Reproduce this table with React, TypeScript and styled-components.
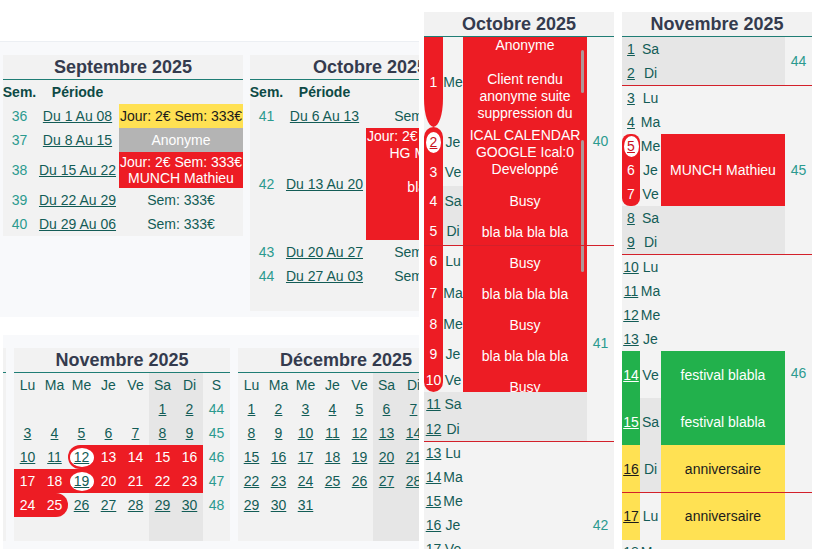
import React from "react";
import styled, { createGlobalStyle, css } from "styled-components";

type Tone = "red" | "green" | "yellow" | "gray";
const BG: Record<Tone, string> = { red: "#ed1c24", green: "#22b14c", yellow: "#ffe153", gray: "#b4b4b4" };
const FG: Record<Tone, string> = { red: "#ffffff", green: "#ffffff", yellow: "#1b1b1b", gray: "#ffffff" };

const INK = "#135c56";
const HEAD = "#0d4a45";
const WEEK = "#2b9a8f";
const TITLE = "#343b4e";
const LINE = "#1f7d75";
const CARD = "#f2f2f2";
const WEEKEND = "#e6e6e6";
const PANEL = "#f8f9fb";
const SEP = "#d3202a";
const RINGTXT = "#c8101e";

const GlobalStyle = createGlobalStyle`
  html, body { margin: 0; padding: 0; background: #ffffff; }
  body { font-family: "Liberation Sans", Arial, sans-serif; font-size: 14px; color: ${INK}; }
  #root { width: 815px; height: 549px; overflow: hidden; }
`;

const Page = styled.div`
  display: flex;
  align-items: flex-start;
  width: 815px;
  height: 549px;
  overflow: hidden;
  background: #ffffff;
  font-family: "Liberation Sans", Arial, sans-serif;
  font-size: 14px;
`;

const LeftArea = styled.div`
  flex: none;
  width: 419px;
  height: 549px;
  padding-top: 41px;
  box-sizing: border-box;
  overflow: hidden;
  display: flex;
  flex-direction: column;
`;

const TopPanel = styled.div`
  flex: none;
  height: 276px;
  box-sizing: border-box;
  background: ${PANEL};
  border-top: 1px solid #eceff3;
  padding: 13px 0 0 3px;
  display: flex;
  gap: 7px;
  align-items: flex-start;
  overflow: hidden;
`;

const BottomPanel = styled.div`
  flex: 1;
  margin: 18px 0 0 3px;
  background: ${PANEL};
  padding-top: 13px;
  display: flex;
  gap: 8px;
  align-items: flex-start;
  overflow: hidden;
`;

/* ---------- week list cards ---------- */

const WeekCard = styled.section<{ $padBottom: number }>`
  flex: none;
  width: 240px;
  background: ${CARD};
  padding-bottom: ${(p) => p.$padBottom}px;
`;

const CardTitle = styled.h2`
  margin: 0;
  height: 24px;
  line-height: 24px;
  text-align: center;
  font-size: 18px;
  font-weight: 700;
  color: ${TITLE};
  border-bottom: 1px solid ${LINE};
  white-space: nowrap;
`;

const WeekRow = styled.div<{ $h: number }>`
  display: grid;
  grid-template-columns: 33px 83px 124px;
  height: ${(p) => p.$h}px;
`;

const HeadCell = styled.div`
  display: flex;
  align-items: center;
  justify-content: center;
  font-weight: 700;
  color: ${HEAD};
`;

const WeekNum = styled.div`
  display: flex;
  align-items: center;
  justify-content: center;
  color: ${WEEK};
`;

const PeriodCell = styled.div`
  display: flex;
  align-items: center;
  justify-content: center;
  white-space: nowrap;
`;

const Link = styled.span`
  color: ${INK};
  text-decoration: underline;
  cursor: pointer;
`;

const Booking = styled.div<{ $tone?: Tone; $lh: number; $top?: boolean }>`
  display: flex;
  flex-direction: column;
  align-items: center;
  justify-content: ${(p) => (p.$top ? "flex-start" : "center")};
  line-height: ${(p) => p.$lh}px;
  background: ${(p) => (p.$tone ? BG[p.$tone] : "transparent")};
  color: ${(p) => (p.$tone ? FG[p.$tone] : INK)};
  white-space: nowrap;
  text-align: center;
`;

type WeekEntry = { wk: number; period: string; tone?: Tone; lines: string[]; h?: number; lh?: number; top?: boolean };

const septRows: WeekEntry[] = [
  { wk: 36, period: "Du 1 Au 08", tone: "yellow", lines: ["Jour: 2€ Sem: 333€"] },
  { wk: 37, period: "Du 8 Au 15", tone: "gray", lines: ["Anonyme"] },
  { wk: 38, period: "Du 15 Au 22", tone: "red", lines: ["Jour: 2€ Sem: 333€", "MUNCH Mathieu"], h: 36, lh: 16 },
  { wk: 39, period: "Du 22 Au 29", lines: ["Sem: 333€"] },
  { wk: 40, period: "Du 29 Au 06", lines: ["Sem: 333€"] },
];

const octRows: WeekEntry[] = [
  { wk: 41, period: "Du 6 Au 13", lines: ["Sem: 333€"] },
  { wk: 42, period: "Du 13 Au 20", tone: "red", lines: ["Jour: 2€ Sem: 333€", "HG MUNCH", "", "bla bla"], h: 112, lh: 17, top: true },
  { wk: 43, period: "Du 20 Au 27", lines: ["Sem: 333€"] },
  { wk: 44, period: "Du 27 Au 03", lines: ["Sem: 333€"] },
];

function WeekList({ title, rows, padBottom }: { title: string; rows: WeekEntry[]; padBottom: number }) {
  return (
    <WeekCard $padBottom={padBottom}>
      <CardTitle>{title}</CardTitle>
      <WeekRow $h={24}>
        <HeadCell>Sem.</HeadCell>
        <HeadCell>Période</HeadCell>
        <div />
      </WeekRow>
      {rows.map((r) => (
        <WeekRow key={r.wk} $h={r.h ?? 24}>
          <WeekNum>{r.wk}</WeekNum>
          <PeriodCell>
            <Link>{r.period}</Link>
          </PeriodCell>
          <Booking $tone={r.tone} $lh={r.lh ?? 24} $top={r.top}>
            {r.lines.map((l, i) => (
              <span key={i}>{l === "" ? "\u00a0" : l}</span>
            ))}
          </Booking>
        </WeekRow>
      ))}
    </WeekCard>
  );
}

/* ---------- month grid cards ---------- */

const MonthCard = styled.section<{ $peek?: boolean }>`
  flex: none;
  width: 216px;
  background: ${CARD};
  margin-left: ${(p) => (p.$peek ? "-213px" : "0")};
  min-height: 193px;
`;

const MonthGrid = styled.div`
  display: grid;
  grid-template-columns: repeat(8, 27px);
  grid-auto-rows: 24px;
`;

const MonthCell = styled.div<{ $bg: string; $radius: string; $fg: string }>`
  display: flex;
  align-items: center;
  justify-content: center;
  background: ${(p) => p.$bg};
  border-radius: ${(p) => p.$radius};
  color: ${(p) => p.$fg};
  white-space: nowrap;
`;

const DayNo = styled.span<{ $plain?: boolean }>`
  text-decoration: ${(p) => (p.$plain ? "none" : "underline")};
`;

const Ring = styled.span<{ $w: number; $h: number; $fg: string }>`
  display: inline-flex;
  align-items: center;
  justify-content: center;
  width: ${(p) => p.$w}px;
  height: ${(p) => p.$h}px;
  border-radius: 50%;
  background: #ffffff;
  color: ${(p) => p.$fg};
  text-decoration: underline;
  flex: none;
`;

type Mark = { radius?: string; ring?: boolean };

function buildMonth(offset: number, count: number, weeks: number[]) {
  const rows: (number | null)[][] = [];
  let d = 1 - offset;
  for (let r = 0; r < 6; r++) {
    const row: (number | null)[] = [];
    for (let c = 0; c < 7; c++) {
      row.push(d >= 1 && d <= count ? d : null);
      d++;
    }
    rows.push(row);
  }
  return rows.map((row, i) => ({ days: row, week: row.some((x) => x !== null) ? weeks[i] : null }));
}

const novRange: Record<number, Mark> = {
  12: { radius: "12px 0 0 12px", ring: true },
  13: {}, 14: {}, 15: {}, 16: {}, 17: {}, 18: {},
  19: { ring: true },
  20: {}, 21: {}, 22: {}, 23: {}, 24: {},
  25: { radius: "0 12px 12px 0" },
};

const DAY_HEADS = ["Lu", "Ma", "Me", "Je", "Ve", "Sa", "Di", "S"];

function MonthView({ title, offset, count, weeks, range = {} }: { title: string; offset: number; count: number; weeks: number[]; range?: Record<number, Mark> }) {
  const rows = buildMonth(offset, count, weeks);
  return (
    <MonthCard>
      <CardTitle>{title}</CardTitle>
      <MonthGrid>
        {DAY_HEADS.map((h, c) => (
          <MonthCell key={h} $bg={c === 5 || c === 6 ? WEEKEND : "transparent"} $radius="0" $fg={INK}>
            {h}
          </MonthCell>
        ))}
        {rows.map((row, r) => (
          <React.Fragment key={r}>
            {row.days.map((d, c) => {
              const mark = d !== null ? range[d] : undefined;
              const weekend = c === 5 || c === 6;
              const bg = mark ? BG.red : weekend ? WEEKEND : "transparent";
              return (
                <MonthCell key={c} $bg={bg} $radius={mark?.radius ?? "0"} $fg={mark ? "#ffffff" : INK}>
                  {d !== null &&
                    (mark?.ring ? (
                      <Ring $w={24} $h={19} $fg={INK}>{d}</Ring>
                    ) : (
                      <DayNo $plain={!!mark}>{d}</DayNo>
                    ))}
                </MonthCell>
              );
            })}
            <MonthCell $bg="transparent" $radius="0" $fg={WEEK}>
              {row.week ?? ""}
            </MonthCell>
          </React.Fragment>
        ))}
      </MonthGrid>
    </MonthCard>
  );
}

const PeekCard = styled(MonthCard)`
  min-height: 193px;
`;

const PeekTitle = styled.div`
  height: 24px;
  border-bottom: 1px solid ${LINE};
`;

/* ---------- tall day-by-day columns ---------- */

const TallColumn = styled.section<{ $ml: number }>`
  flex: none;
  width: 190px;
  margin: 12px 0 0 ${(p) => p.$ml}px;
  background: #f3f3f3;
`;

const TallTitle = styled(CardTitle)`
  background: ${CARD};
`;

const TallGrid = styled.div<{ $rows: string; $cols: string }>`
  display: grid;
  grid-template-columns: ${(p) => p.$cols};
  grid-template-rows: ${(p) => p.$rows};
`;

type PlaceProps = { $row: number; $span?: number; $col: string };
const placed = css<PlaceProps>`
  grid-row: ${(p) => p.$row} / span ${(p) => p.$span ?? 1};
  grid-column: ${(p) => p.$col};
`;

const WeekendBand = styled.div<PlaceProps>`
  ${placed};
  background: ${WEEKEND};
`;

const DayNumCell = styled.div<PlaceProps & { $bg: string; $radius: string; $fg: string; $under: boolean }>`
  ${placed};
  display: flex;
  align-items: center;
  justify-content: center;
  background: ${(p) => p.$bg};
  border-radius: ${(p) => p.$radius};
  color: ${(p) => p.$fg};
  text-decoration: ${(p) => (p.$under ? "underline" : "none")};
  white-space: nowrap;
  position: relative;
`;

const DayNameCell = styled.div<PlaceProps>`
  ${placed};
  display: flex;
  align-items: center;
  justify-content: center;
  color: ${INK};
  white-space: nowrap;
`;

const EventBlock = styled.div<PlaceProps & { $tone: Tone; $stack?: boolean }>`
  ${placed};
  display: flex;
  flex-direction: column;
  align-items: stretch;
  justify-content: ${(p) => (p.$stack ? "flex-start" : "center")};
  text-align: center;
  background: ${(p) => BG[p.$tone]};
  color: ${(p) => FG[p.$tone]};
  overflow: hidden;
  position: relative;
  white-space: nowrap;
`;

const EventPara = styled.div<{ $h: number }>`
  flex: none;
  height: ${(p) => p.$h}px;
  line-height: 17px;
`;

const EventLine = styled.div`
  flex: none;
  height: 31px;
  line-height: 31px;
`;

const Thumb = styled.div<{ $top: number; $h: number }>`
  position: absolute;
  right: 3px;
  top: ${(p) => p.$top}px;
  width: 3px;
  height: ${(p) => p.$h}px;
  border-radius: 2px;
  background: rgba(165, 165, 165, 0.9);
`;

const WeekLabel = styled.div<PlaceProps>`
  ${placed};
  display: flex;
  align-items: center;
  justify-content: center;
  color: ${WEEK};
`;

const Separator = styled.div<PlaceProps>`
  ${placed};
  align-self: start;
  height: 1px;
  background: ${SEP};
  position: relative;
  z-index: 2;
`;

type TallDay = { n: number; name: string; h: number; weekend?: boolean; tone?: Tone; radius?: string; ring?: boolean };
type TallEvent = { row: number; span: number; tone: Tone; text?: string; stack?: boolean };
type TallWeek = { row: number; span: number; label: string };

const octDays: TallDay[] = [
  { n: 1, name: "Me", h: 90, tone: "red", radius: "0 0 50% 50% / 0 0 28px 28px" },
  { n: 2, name: "Je", h: 30, tone: "red", radius: "50% 50% 0 0 / 10px 10px 0 0", ring: true },
  { n: 3, name: "Ve", h: 29, tone: "red" },
  { n: 4, name: "Sa", h: 30, tone: "red", weekend: true },
  { n: 5, name: "Di", h: 29, tone: "red", weekend: true },
  { n: 6, name: "Lu", h: 32, tone: "red" },
  { n: 7, name: "Ma", h: 31, tone: "red" },
  { n: 8, name: "Me", h: 31, tone: "red" },
  { n: 9, name: "Je", h: 29, tone: "red" },
  { n: 10, name: "Ve", h: 24, tone: "red", radius: "0 0 50% 50% / 0 0 10px 10px" },
  { n: 11, name: "Sa", h: 24, weekend: true },
  { n: 12, name: "Di", h: 25, weekend: true },
  { n: 13, name: "Lu", h: 24 },
  { n: 14, name: "Ma", h: 24 },
  { n: 15, name: "Me", h: 24 },
  { n: 16, name: "Je", h: 24 },
  { n: 17, name: "Ve", h: 24 },
  { n: 18, name: "Sa", h: 24, weekend: true },
  { n: 19, name: "Di", h: 24, weekend: true },
];

const octWeeks: TallWeek[] = [
  { row: 1, span: 5, label: "40" },
  { row: 6, span: 7, label: "41" },
  { row: 13, span: 7, label: "42" },
];

const novDays: TallDay[] = [
  { n: 1, name: "Sa", h: 24, weekend: true },
  { n: 2, name: "Di", h: 24, weekend: true },
  { n: 3, name: "Lu", h: 25 },
  { n: 4, name: "Ma", h: 24 },
  { n: 5, name: "Me", h: 24, tone: "red", radius: "8px 8px 0 0", ring: true },
  { n: 6, name: "Je", h: 24, tone: "red" },
  { n: 7, name: "Ve", h: 24, tone: "red", radius: "0 0 8px 8px" },
  { n: 8, name: "Sa", h: 24, weekend: true },
  { n: 9, name: "Di", h: 24, weekend: true },
  { n: 10, name: "Lu", h: 25 },
  { n: 11, name: "Ma", h: 24 },
  { n: 12, name: "Me", h: 24 },
  { n: 13, name: "Je", h: 24 },
  { n: 14, name: "Ve", h: 47, tone: "green" },
  { n: 15, name: "Sa", h: 47, tone: "green", weekend: true },
  { n: 16, name: "Di", h: 47, tone: "yellow", weekend: true },
  { n: 17, name: "Lu", h: 48, tone: "yellow" },
  { n: 18, name: "Ma", h: 24 },
  { n: 19, name: "Me", h: 24 },
  { n: 20, name: "Je", h: 24 },
  { n: 21, name: "Ve", h: 24 },
  { n: 22, name: "Sa", h: 24, weekend: true },
  { n: 23, name: "Di", h: 24, weekend: true },
];

const novWeeks: TallWeek[] = [
  { row: 1, span: 2, label: "44" },
  { row: 3, span: 7, label: "45" },
  { row: 10, span: 7, label: "46" },
  { row: 17, span: 7, label: "47" },
];

const novEvents: TallEvent[] = [
  { row: 5, span: 3, tone: "red", text: "MUNCH Mathieu" },
  { row: 14, span: 1, tone: "green", text: "festival blabla" },
  { row: 15, span: 1, tone: "green", text: "festival blabla" },
  { row: 16, span: 1, tone: "yellow", text: "anniversaire" },
  { row: 17, span: 1, tone: "yellow", text: "anniversaire" },
];

const octLines = ["Busy", "bla bla bla bla", "Busy", "bla bla bla bla", "Busy", "bla bla bla bla", "Busy"];

function OctoberStack() {
  return (
    <>
      <EventPara $h={90}>
        <div>Anonyme</div>
        <div>{"\u00a0"}</div>
        <div>Client rendu</div>
        <div>anonyme suite</div>
        <div>suppression du</div>
      </EventPara>
      <EventPara $h={59}>
        <div>ICAL CALENDAR</div>
        <div>GOOGLE Ical:0</div>
        <div>Developpé</div>
      </EventPara>
      {octLines.map((t, i) => (
        <EventLine key={i}>{t}</EventLine>
      ))}
      <Thumb $top={13} $h={43} />
      <Thumb $top={103} $h={132} />
    </>
  );
}

function DayColumn({
  title,
  ml,
  cols,
  days,
  weeks,
  events,
  separators,
  stackEvent,
}: {
  title: string;
  ml: number;
  cols: string;
  days: TallDay[];
  weeks: TallWeek[];
  events: TallEvent[];
  separators: number[];
  stackEvent?: { row: number; span: number };
}) {
  return (
    <TallColumn $ml={ml}>
      <TallTitle>{title}</TallTitle>
      <TallGrid $cols={cols} $rows={days.map((d) => `${d.h}px`).join(" ")}>
        {days.map((d, i) =>
          d.weekend ? <WeekendBand key={`w${d.n}`} $row={i + 1} $col="1 / 4" /> : null
        )}
        {days.map((d, i) => {
          const bg = d.tone ? BG[d.tone] : "transparent";
          const fg = d.tone ? FG[d.tone] : INK;
          const under = d.tone !== "red";
          return (
            <DayNumCell key={`n${d.n}`} $row={i + 1} $col="1" $bg={bg} $radius={d.radius ?? "0"} $fg={fg} $under={under}>
              {d.ring ? (
                <Ring $w={15} $h={21} $fg={RINGTXT}>{d.n}</Ring>
              ) : (
                d.n
              )}
            </DayNumCell>
          );
        })}
        {days.map((d, i) => (
          <DayNameCell key={`d${d.n}`} $row={i + 1} $col="2">
            {d.name}
          </DayNameCell>
        ))}
        {stackEvent && (
          <EventBlock $row={stackEvent.row} $span={stackEvent.span} $col="3" $tone="red" $stack>
            <OctoberStack />
          </EventBlock>
        )}
        {events.map((e, i) => (
          <EventBlock key={`e${i}`} $row={e.row} $span={e.span} $col="3" $tone={e.tone}>
            {e.text}
          </EventBlock>
        ))}
        {weeks.map((w) => (
          <WeekLabel key={w.label} $row={w.row} $span={w.span} $col="4">
            {w.label}
          </WeekLabel>
        ))}
        {separators.map((r) => (
          <Separator key={`s${r}`} $row={r} $col="1 / -1" />
        ))}
      </TallGrid>
    </TallColumn>
  );
}

export default function App() {
  return (
    <>
      <GlobalStyle />
      <Page>
        <LeftArea>
          <TopPanel>
            <WeekList title="Septembre 2025" rows={septRows} padBottom={0} />
            <WeekList title="Octobre 2025" rows={octRows} padBottom={23} />
          </TopPanel>
          <BottomPanel>
            <PeekCard $peek>
              <PeekTitle />
            </PeekCard>
            <MonthView title="Novembre 2025" offset={5} count={30} weeks={[44, 45, 46, 47, 48, 49]} range={novRange} />
            <MonthView title="Décembre 2025" offset={0} count={31} weeks={[49, 50, 51, 52, 1, 2]} />
          </BottomPanel>
        </LeftArea>
        <DayColumn
          title="Octobre 2025"
          ml={5}
          cols="19px 20px 124px 27px"
          days={octDays}
          weeks={octWeeks}
          events={[]}
          separators={[6, 13]}
          stackEvent={{ row: 1, span: 10 }}
        />
        <DayColumn
          title="Novembre 2025"
          ml={8}
          cols="18px 21px 124px 27px"
          days={novDays}
          weeks={novWeeks}
          events={novEvents}
          separators={[3, 10, 17]}
        />
      </Page>
    </>
  );
}
